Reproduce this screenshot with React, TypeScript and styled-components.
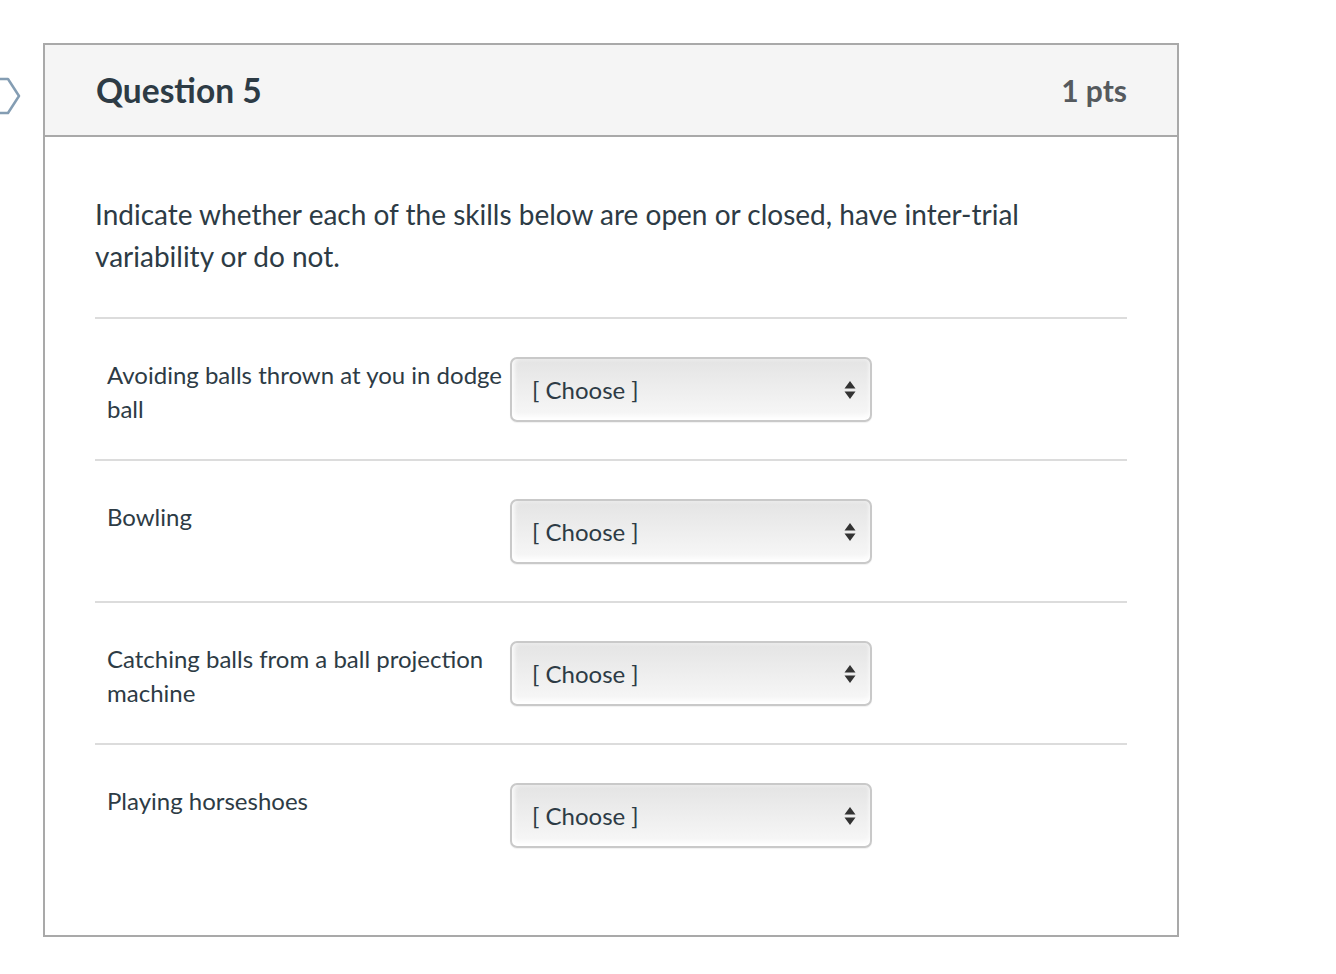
import styled, { createGlobalStyle } from "styled-components";

const GlobalStyle = createGlobalStyle`
  html, body {
    margin: 0;
    padding: 0;
    background: #ffffff;
    font-family: Lato, "Open Sans", "Liberation Sans", sans-serif;
    color: #2d3b45;
  }
`;

const Page = styled.div`
  position: relative;
  width: 1336px;
  height: 974px;
  padding: 43px 0 0 43px;
  box-sizing: border-box;
`;

const NavHex = styled.svg`
  position: absolute;
  left: 0;
  top: 74px;
`;

const Card = styled.div`
  width: 1136px;
  height: 894px;
  box-sizing: border-box;
  border: 2px solid #a9a9a9;
  display: flex;
  flex-direction: column;
`;

const Header = styled.div`
  height: 92px;
  box-sizing: border-box;
  background: #f5f5f5;
  border-bottom: 2px solid #a9a9a9;
  display: flex;
  align-items: center;
  justify-content: space-between;
  padding: 0 50px 0 51px;
`;

const Title = styled.h2`
  margin: 0;
  font-size: 33.5px;
  font-weight: 700;
  color: #2d3b45;
`;

const Points = styled.div`
  font-size: 30px;
  font-weight: 700;
  color: #555a5e;
`;

const Body = styled.div`
  padding: 56px 50px 0 50px;
`;

const Prompt = styled.p`
  margin: 0 0 40px 0;
  font-size: 28px;
  line-height: 42px;
  color: #2d3b45;
`;

const Row = styled.div`
  border-top: 2px solid #dcdcdc;
  height: 142px;
  box-sizing: border-box;
  padding: 38px 0 0 12px;
  display: flex;
  align-items: flex-start;
`;

const Label = styled.div`
  width: 403px;
  font-size: 24px;
  line-height: 34px;
  padding-top: 1px;
  color: #2d3b45;
`;

const Select = styled.div`
  width: 362px;
  height: 65px;
  box-sizing: border-box;
  border: 2px solid #c9c9c9;
  border-radius: 7px;
  background: linear-gradient(#e4e4e4, #f8f8f8);
  box-shadow: inset 0 -4px 5px rgba(255, 255, 255, 0.95), inset 3px 0 4px rgba(255, 255, 255, 0.6),
    0 1px 1px rgba(0, 0, 0, 0.06);
  display: flex;
  align-items: center;
  justify-content: space-between;
  padding: 0 14px 0 20px;
  font-size: 24px;
  color: #2d3b45;
`;

const Arrows = styled.svg`
  display: block;
`;

const items = [
  "Avoiding balls thrown at you in dodge ball",
  "Bowling",
  "Catching balls from a ball projection machine",
  "Playing horseshoes",
];

export default function App() {
  return (
    <>
      <GlobalStyle />
      <Page>
        <NavHex width="24" height="44" viewBox="0 0 24 44">
          <path
            d="M-4 5 H8 L19 22 L8 39 H-4"
            fill="none"
            stroke="#6f8ca6"
            strokeWidth="2.5"
            strokeLinejoin="round"
            opacity="0.85"
          />
        </NavHex>
        <Card>
          <Header>
            <Title>Question 5</Title>
            <Points>1 pts</Points>
          </Header>
          <Body>
            <Prompt>
              Indicate whether each of the skills below are open or closed, have inter-trial
              <br />
              variability or do not.
            </Prompt>
            {items.map((item) => (
              <Row key={item}>
                <Label>{item}</Label>
                <Select>
                  <span>[ Choose ]</span>
                  <Arrows width="12" height="20" viewBox="0 0 12 20">
                    <path d="M6 1 L11.5 8.5 H0.5 Z M6 19 L11.5 11.5 H0.5 Z" fill="#333" />
                  </Arrows>
                </Select>
              </Row>
            ))}
          </Body>
        </Card>
      </Page>
    </>
  );
}
